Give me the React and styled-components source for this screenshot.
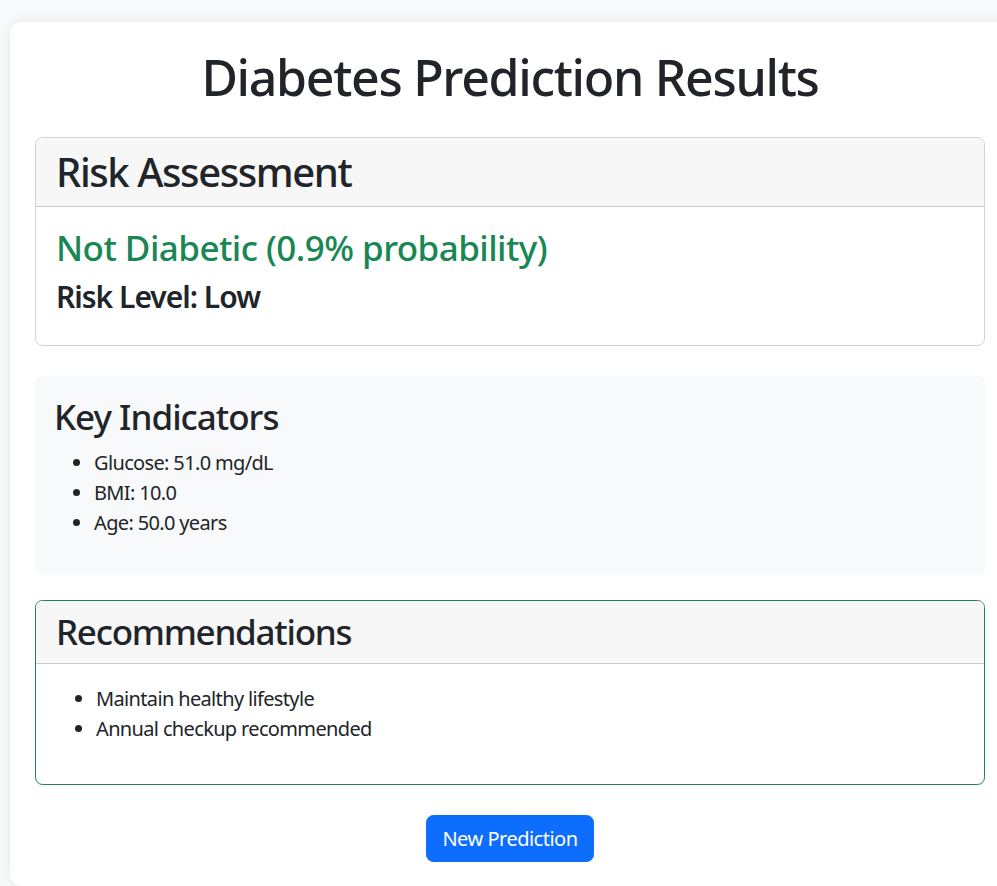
import React from 'react';
import styled, { createGlobalStyle } from 'styled-components';

const GlobalStyle = createGlobalStyle`
  html, body {
    margin: 0;
    padding: 0;
    background: #f8f9fa;
    overflow: hidden;
  }
  body {
    font-family: "Noto Sans", "Open Sans", sans-serif;
    font-size: 20px;
    line-height: 1.5;
    color: #212529;
  }
  * {
    box-sizing: border-box;
  }
`;

const Page = styled.div`
  padding: 22px 0 0 10px;
`;

const Panel = styled.main`
  width: 1000px;
  background: #fff;
  border-radius: 12px;
  box-shadow: 0 0 12px rgba(0, 0, 0, 0.08);
  padding: 25px 25px 24px;
  display: flex;
  flex-direction: column;
`;

const Title = styled.h1`
  margin: 0 0 30px;
  font-size: 50px;
  font-weight: 500;
  line-height: 1.2;
  letter-spacing: -1.3px;
  text-align: center;
`;

const Card = styled.section`
  border: 1px solid ${(p) => p.$border || 'rgba(0, 0, 0, 0.175)'};
  border-radius: 7.5px;
  margin-bottom: 30px;
  overflow: hidden;
`;

const CardHeader = styled.header`
  background: #f7f7f7;
  border-bottom: 1px solid rgba(0, 0, 0, 0.175);
  padding: 10px 20px;

  h2, h3 {
    margin: 0;
    font-weight: 500;
    line-height: 1.2;
  }
  h2 {
    font-size: 40px;
    letter-spacing: -1.4px;
  }
  h3 {
    font-size: 35px;
    letter-spacing: -1.25px;
  }
`;

const CardBody = styled.div`
  padding: 20px;
`;

const Verdict = styled.h3`
  margin: 0 0 10px;
  font-size: 35px;
  font-weight: 500;
  line-height: 1.2;
  letter-spacing: -0.55px;
  color: #198754;
`;

const RiskLevel = styled.h4`
  margin: 0 0 10px;
  font-size: 30px;
  font-weight: 600;
  line-height: 1.2;
  letter-spacing: -1px;
`;

const Indicators = styled.section`
  background: #f8f9fa;
  border-radius: 7.5px;
  padding: 20px 20px 17px 19px;
  margin-bottom: 25px;

  h3 {
    margin: 0 0 10px;
    font-size: 35px;
    font-weight: 500;
    line-height: 1.2;
    letter-spacing: -1px;
  }
`;

const List = styled.ul`
  margin: 0 0 20px;
  padding-left: 40px;

  li {
    line-height: 30px;
    letter-spacing: -0.65px;
  }
`;

const Actions = styled.div`
  display: flex;
  justify-content: center;
`;

const Button = styled.button`
  font-family: inherit;
  font-size: 20px;
  line-height: 1.5;
  letter-spacing: -0.5px;
  color: #fff;
  background: #0d6efd;
  border: 1px solid #0d6efd;
  border-radius: 7.5px;
  padding: 7.5px 15px;
  cursor: pointer;
`;

export default function App() {
  return (
    <>
      <GlobalStyle />
      <Page>
        <Panel>
          <Title>Diabetes Prediction Results</Title>

          <Card>
            <CardHeader>
              <h2>Risk Assessment</h2>
            </CardHeader>
            <CardBody>
              <Verdict>Not Diabetic (0.9% probability)</Verdict>
              <RiskLevel>Risk Level: Low</RiskLevel>
            </CardBody>
          </Card>

          <Indicators>
            <h3>Key Indicators</h3>
            <List>
              <li>Glucose: 51.0 mg/dL</li>
              <li>BMI: 10.0</li>
              <li>Age: 50.0 years</li>
            </List>
          </Indicators>

          <Card $border="#198754">
            <CardHeader>
              <h3>Recommendations</h3>
            </CardHeader>
            <CardBody>
              <List>
                <li>Maintain healthy lifestyle</li>
                <li>Annual checkup recommended</li>
              </List>
            </CardBody>
          </Card>

          <Actions>
            <Button type="button">New Prediction</Button>
          </Actions>
        </Panel>
      </Page>
    </>
  );
}
